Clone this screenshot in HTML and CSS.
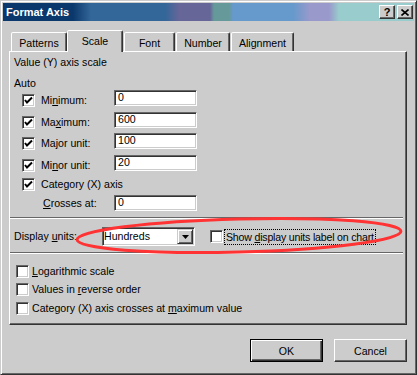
FILE: index.html
```html
<!DOCTYPE html>
<html>
<head>
    <meta charset="utf-8">
    <title>Format Axis</title>
    <link rel="stylesheet" href="styles.css">
</head>
<body>
    <div class="window">
        <div class="titlebar">
            <span class="title">Format Axis</span>
            <div class="cap-btns">
                <span class="cap-btn">?</span>
                <span class="cap-btn">
                    <svg width="8" height="7" viewBox="0 0 8 7"><path d="M0.5 0.5 L7.5 6.5 M7.5 0.5 L0.5 6.5" stroke="#000" stroke-width="1.6"/></svg>
                </span>
            </div>
        </div>

        <div class="tabs">
            <div class="tab tab-patterns">Patterns</div>
            <div class="tab tab-scale active">Scale</div>
            <div class="tab tab-font">Font</div>
            <div class="tab tab-number">Number</div>
            <div class="tab tab-align">Alignment</div>
        </div>

        <div class="panel">
            <div class="heading">Value (Y) axis scale</div>
            <div class="auto">Auto</div>
            <div class="rows">
                <div class="row">
                    <span class="check on"><svg width="11" height="11" viewBox="0 0 11 11"><polyline points="2,5 4,7.5 9,2.5" fill="none" stroke="#000" stroke-width="2"/></svg></span>
                    <span class="label">Mi<u>n</u>imum:</span>
                    <span class="field">0</span>
                </div>
                <div class="row">
                    <span class="check on"><svg width="11" height="11" viewBox="0 0 11 11"><polyline points="2,5 4,7.5 9,2.5" fill="none" stroke="#000" stroke-width="2"/></svg></span>
                    <span class="label">Ma<u>x</u>imum:</span>
                    <span class="field">600</span>
                </div>
                <div class="row">
                    <span class="check on"><svg width="11" height="11" viewBox="0 0 11 11"><polyline points="2,5 4,7.5 9,2.5" fill="none" stroke="#000" stroke-width="2"/></svg></span>
                    <span class="label">Ma<u>j</u>or unit:</span>
                    <span class="field">100</span>
                </div>
                <div class="row">
                    <span class="check on"><svg width="11" height="11" viewBox="0 0 11 11"><polyline points="2,5 4,7.5 9,2.5" fill="none" stroke="#000" stroke-width="2"/></svg></span>
                    <span class="label">Mi<u>n</u>or unit:</span>
                    <span class="field">20</span>
                </div>
                <div class="row row-cat">
                    <span class="check on"><svg width="11" height="11" viewBox="0 0 11 11"><polyline points="2,5 4,7.5 9,2.5" fill="none" stroke="#000" stroke-width="2"/></svg></span>
                    <span class="label">Category (X) axis</span>
                </div>
                <div class="row row-crosses">
                    <span class="label"><u>C</u>rosses at:</span>
                    <span class="field">0</span>
                </div>
            </div>

            <div class="sep"></div>

            <div class="units">
                <span class="units-label">Display <u>u</u>nits:</span>
                <span class="select">Hundreds
                    <span class="drop"><svg width="7" height="4" viewBox="0 0 7 4"><polygon points="0,0 7,0 3.5,4" fill="#000"/></svg></span>
                </span>
                <span class="check show"></span>
                <span class="focus">Show <u>d</u>isplay units label on chart</span>
            </div>

            <div class="sep"></div>

            <div class="options">
                <div class="opt"><span class="check"></span><span><u>L</u>ogarithmic scale</span></div>
                <div class="opt"><span class="check"></span><span>Values in <u>r</u>everse order</span></div>
                <div class="opt"><span class="check"></span><span>Category (X) axis crosses at <u>m</u>aximum value</span></div>
            </div>
        </div>

        <div class="buttons">
            <span class="btn btn-default">OK</span>
            <span class="btn">Cancel</span>
        </div>

        <!-- red mark drawn over the dialog -->
        <svg class="mark" width="417" height="375" viewBox="0 0 417 375">
            <ellipse cx="239" cy="235.5" rx="162" ry="16.5" transform="rotate(-1.5 239 235.5)" fill="none" stroke="#ff3333" stroke-width="3"/>
        </svg>
    </div>
</body>
</html>
```

FILE: styles.css
```css
* {box-sizing: border-box;}
body {margin: 0; background: #cccccc; font-family: "Liberation Sans", Arial, sans-serif; font-size: 10.6px; color: #000;}

.window {
    position: relative;
    width: 417px;
    height: 375px;
    background: #cccccc;
    border: 1px solid;
    border-color: #cccccc #333333 #333333 #cccccc;
    box-shadow: inset 1px 1px #ffffff, inset -1px -1px #666666;
    padding: 2px;}

.titlebar {
    display: flex;
    align-items: center;
    justify-content: space-between;
    height: 18px;
    padding: 0 1px 0 3px;
    background: linear-gradient(to right,
        #0b386c 0, #0b386c 70px, #336699 88px, #336699 162px,
        #666699 176px, #666699 207px, #669999 211px, #669999 226px,
        #6699cc 230px, #6699cc 290px, #9999cc 307px, #9999cc 326px,
        #99cccc 336px, #99cccc 100%);}
.title {color: #fff; font-weight: bold; font-size: 11px;}
.cap-btns {display: flex; gap: 2px;}
.cap-btn {
    width: 16px;
    height: 14px;
    display: flex;
    align-items: center;
    justify-content: center;
    background: #cccccc;
    border: 1px solid;
    border-color: #ffffff #333333 #333333 #ffffff;
    box-shadow: inset -1px -1px #666666;
    font-weight: bold;
    font-size: 11px;
    line-height: 12px;}

.tabs {
    position: relative;
    z-index: 1;
    display: flex;
    align-items: flex-end;
    gap: 1px;
    height: 21px;
    margin: 9px 0 0 8px;}
.tab {
    height: 19px;
    padding-top: 4px;
    text-align: center;
    line-height: 13px;
    background: #cccccc;
    border: 1px solid;
    border-bottom: none;
    border-color: #ffffff #333333 transparent #ffffff;
    border-radius: 2px 2px 0 0;
    box-shadow: inset -1px 0 #666666;}
.tab.active {height: 22px; margin-left: -1px; margin-bottom: -1px;}
.tab-patterns {width: 56px;}
.tab-scale {width: 56px;}
.tab-font {width: 51px;}
.tab-number {width: 54px;}
.tab-align {width: 63px;}

.panel {
    width: 398px;
    height: 274px;
    margin-left: 6px;
    padding: 4px 0 0 4px;
    line-height: 13px;
    border: 1px solid;
    border-color: #ffffff #333333 #333333 #ffffff;
    box-shadow: inset -1px -1px #666666;}
.auto {margin-top: 8px;}

.check {
    flex: none;
    width: 13px;
    height: 13px;
    background: #fff;
    border: 1px solid;
    border-color: #666666 #ffffff #ffffff #666666;
    box-shadow: inset 1px 1px #333333, inset -1px -1px #cccccc;}
.check svg {display: block;}
.field {
    flex: none;
    align-self: flex-start;
    width: 83px;
    height: 16px;
    padding-left: 3px;
    line-height: 13px;
    background: #fff;
    border: 1px solid;
    border-color: #666666 #ffffff #ffffff #666666;
    box-shadow: inset 1px 1px #333333, inset -1px -1px #cccccc;}

.rows {margin-left: 8px;}
.row {display: flex; align-items: center; height: 21.5px;}
.row .label {width: 73px; margin-left: 6px; white-space: nowrap;}
.row-cat {height: 17px;}
.row-cat .label {width: auto;}
.row-crosses {height: 16px; margin-top: 2px; padding-left: 21px;}
.row-crosses .label {width: 71px; margin-left: 0;}

.sep {
    height: 2px;
    margin: 6px 3px 0 -4px;
    border-top: 1px solid #666666;
    border-bottom: 1px solid #ffffff;}

.units {display: flex; align-items: center; height: 19px; margin-top: 8px; white-space: nowrap;}
.units-label {width: 88px;}
.select {
    display: flex;
    align-items: center;
    width: 93px;
    height: 19px;
    padding-left: 1px;
    background: #fff;
    border: 1px solid;
    border-color: #666666 #ffffff #ffffff #666666;
    box-shadow: inset 1px 1px #333333, inset -1px -1px #cccccc;}
.drop {
    display: flex;
    align-items: center;
    justify-content: center;
    width: 16px;
    height: 15px;
    margin: 0 1px 0 auto;
    background: #cccccc;
    border: 1px solid;
    border-color: #cccccc #333333 #333333 #cccccc;
    box-shadow: inset 1px 1px #ffffff, inset -1px -1px #666666;}
.check.show {margin-left: 15px;}
.focus {
    margin-left: 1px;
    padding: 1px 2px;
    letter-spacing: -0.2px;
    line-height: 14px;
    outline: 1px dotted #000;
    outline-offset: -1px;}

.options {margin: 8px 0 0 2px;}
.opt {display: flex; align-items: center; gap: 3px; height: 18.5px;}

.buttons {
    display: flex;
    justify-content: flex-end;
    gap: 11px;
    width: 398px;
    margin: 14px 0 0 6px;}
.btn {
    display: flex;
    align-items: center;
    justify-content: center;
    width: 73px;
    height: 23px;
    background: #cccccc;
    border: 1px solid;
    border-color: #ffffff #333333 #333333 #ffffff;
    box-shadow: inset -1px -1px #666666;}
.btn-default {
    border-color: #000;
    box-shadow: inset 1px 1px #ffffff, inset -1px -1px #333333, inset -2px -2px #666666;}

.mark {position: absolute; left: -1px; top: -1px; pointer-events: none;}
```
